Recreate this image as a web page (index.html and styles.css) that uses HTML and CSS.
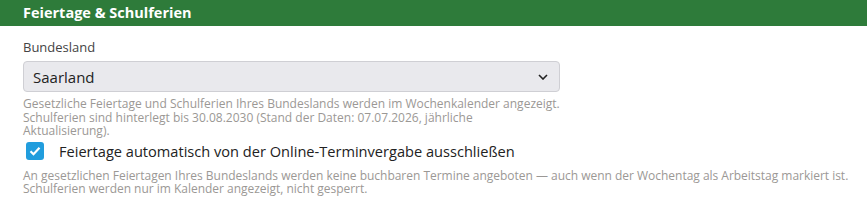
FILE: index.html
```html
<!DOCTYPE html>
<html lang="de">

<head>
    <meta charset="UTF-8">
    <meta name="viewport" content="width=device-width, initial-scale=1.0">
    <title>Feiertage &amp; Schulferien</title>
    <link rel="stylesheet" href="styles.css">
</head>

<body>
    <div class="panel">
        <div class="panel-head">Feiertage &amp; Schulferien</div>
        <div class="panel-body">
            <label class="field-label" for="state">Bundesland</label>
            <div class="narrow">
                <div class="select-wrap">
                    <select id="state" class="select">
                        <option>Saarland</option>
                    </select>
                    <svg class="chevron" width="10" height="6" viewBox="0 0 10 6">
                        <path d="M1 1l4 4 4-4" fill="none" stroke="#222" stroke-width="1.6"/>
                    </svg>
                </div>
                <p class="hint">Gesetzliche Feiertage und Schulferien Ihres Bundeslands werden im Wochenkalender angezeigt. Schulferien sind hinterlegt bis 30.08.2030 (Stand der Daten: 07.07.2026, jährliche Aktualisierung).</p>
            </div>
            <label class="check-row">
                <span class="check-box">
                    <svg width="12" height="10" viewBox="0 0 12 10">
                        <path d="M1.5 5.2l3 3 6-6.4" fill="none" stroke="#fff" stroke-width="2.2"/>
                    </svg>
                </span>
                <span class="check-text">Feiertage automatisch von der Online-Terminvergabe ausschließen</span>
            </label>
            <p class="hint hint-wide">An gesetzlichen Feiertagen Ihres Bundeslands werden keine buchbaren Termine angeboten — auch wenn der Wochentag als Arbeitstag markiert ist. Schulferien werden nur im Kalender angezeigt, nicht gesperrt.</p>
        </div>
    </div>
</body>

</html>
```

FILE: styles.css
```css
* {
    padding: 0;
    margin: 0;
    box-sizing: border-box;
}

body {
    font-family: "Open Sans", "Noto Sans", sans-serif;
    color: #333;
    background: #fff;
}

.panel-head {
    background-color: #2e7b3a;
    color: #fff;
    font-weight: 700;
    font-size: 14.5px;
    height: 26px;
    line-height: 25px;
    padding: 0 23px;
}

.panel-body {
    padding: 13px 10px 0 23px;
}

.field-label {
    display: block;
    font-size: 13px;
    line-height: 16px;
    color: #444;
    margin-bottom: 6px;
}

.narrow {
    width: 537px;
}

.select-wrap {
    position: relative;
}

.select {
    display: block;
    width: 100%;
    height: 31px;
    padding: 0 9px;
    font-family: inherit;
    font-size: 15px;
    color: #222;
    background-color: #e9e9ed;
    border: 1px solid #cfcfd4;
    border-radius: 4px;
    appearance: none;
    -webkit-appearance: none;
}

.chevron {
    position: absolute;
    right: 12px;
    top: 13px;
    pointer-events: none;
}

.hint {
    font-size: 12px;
    line-height: 13.5px;
    color: #9b9895;
    margin-top: 5px;
}

.hint-wide {
    margin-top: 8px;
    letter-spacing: -0.02px;
}

.check-row {
    display: flex;
    align-items: center;
    gap: 15px;
    padding-left: 3px;
    margin-top: 3px;
}

.check-box {
    width: 18px;
    height: 18px;
    border-radius: 3px;
    background-color: #219ddd;
    display: flex;
    align-items: center;
    justify-content: center;
}

.check-text {
    font-size: 14.6px;
    color: #222;
}
```
